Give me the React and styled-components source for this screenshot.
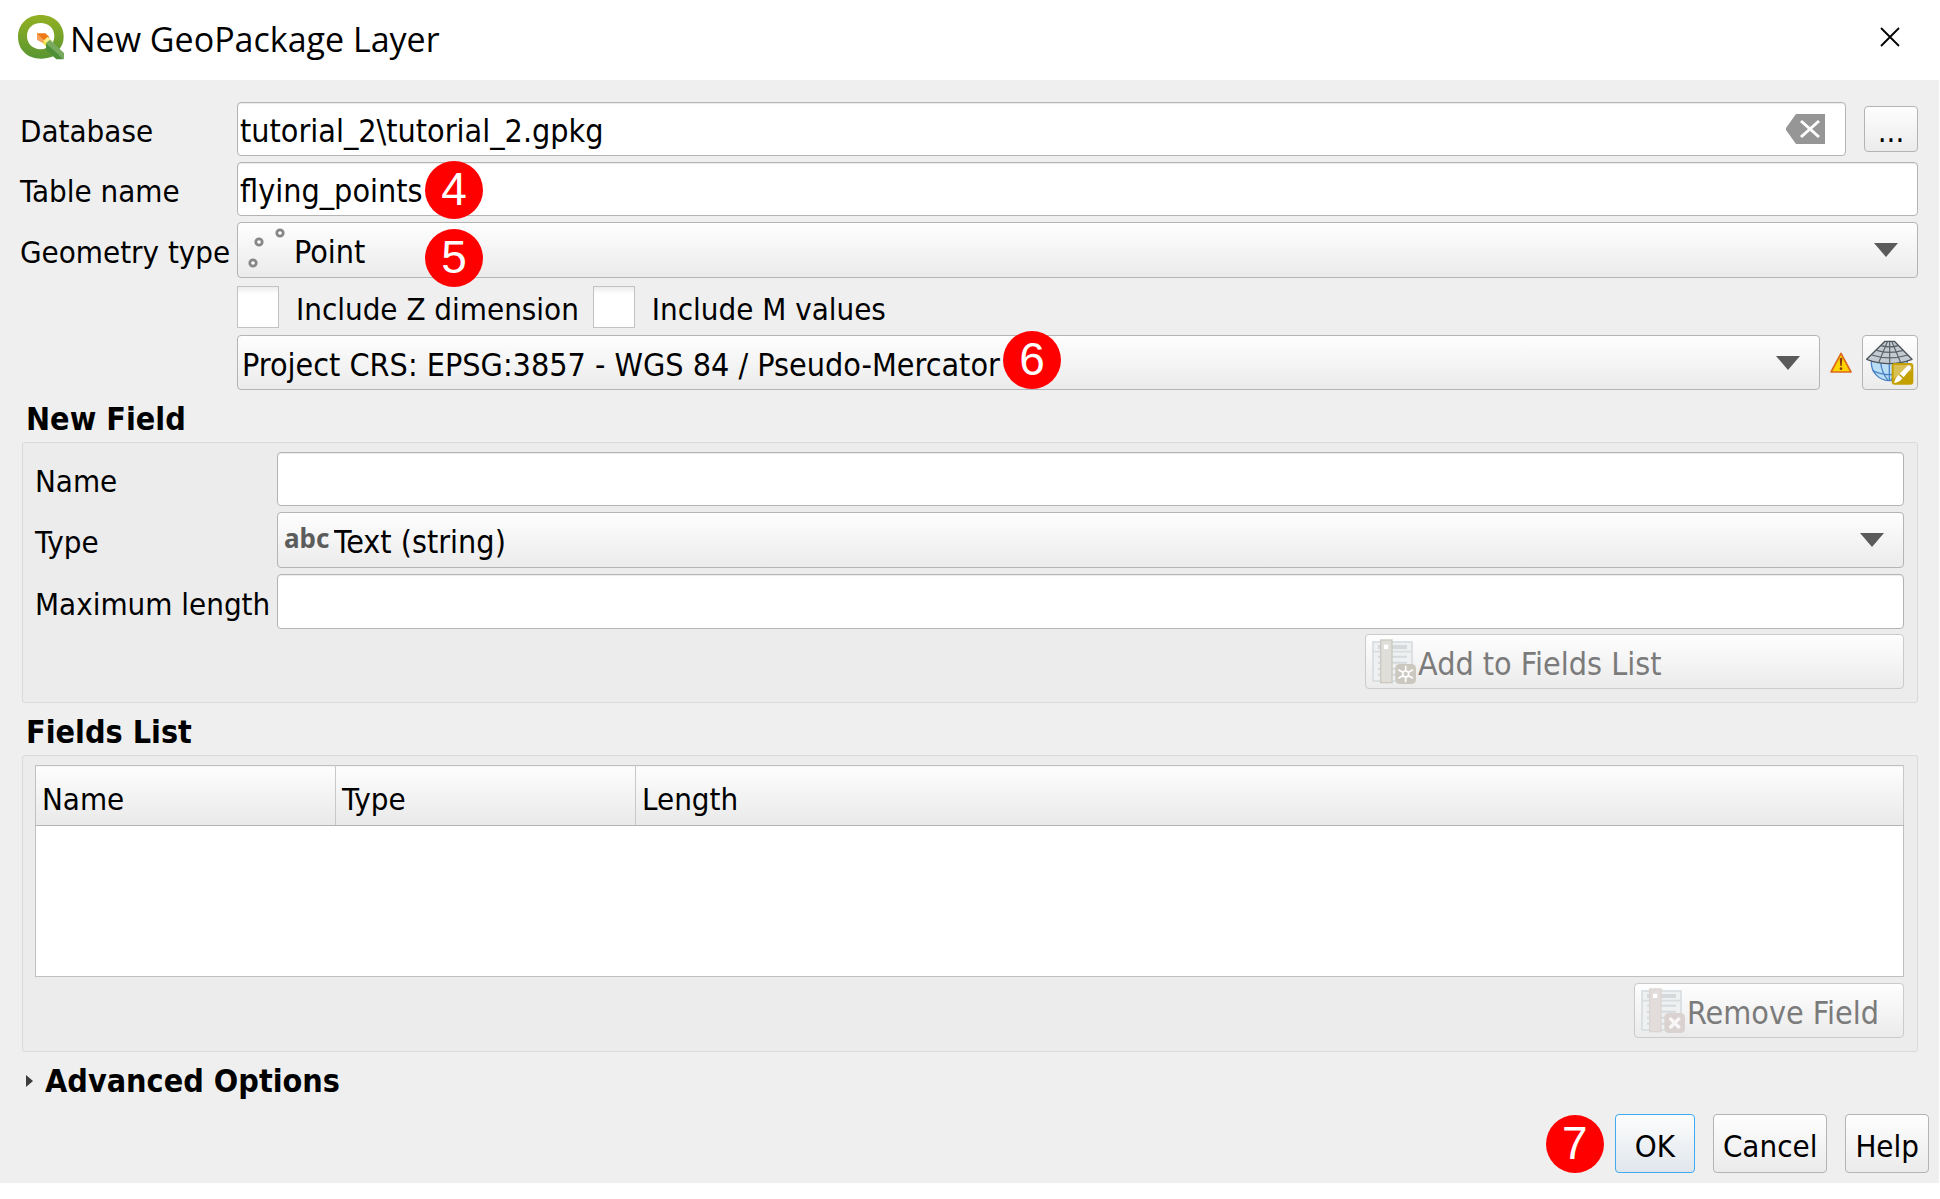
import React from "react";
import styled, { createGlobalStyle, css } from "styled-components";

const uiFont = '"DejaVu Sans Condensed", "Noto Sans", sans-serif';

const GlobalStyle = createGlobalStyle`
  *, *::before, *::after { box-sizing: border-box; }
  body { margin: 0; background: #fff; }
  button, input, select { font: inherit; color: inherit; margin: 0; }
`;

const Dialog = styled.div`
  border-right: 1px solid #fff;
  font-family: ${uiFont};
  font-size: 31px;
  line-height: 36px;
  color: #000;
`;

const TitleBar = styled.header`
  display: flex;
  align-items: center;
  height: 80px;
  padding: 0 39px 6px 18px;
  background: #fff;
`;

const Title = styled.h1`
  flex: 1;
  margin: 0;
  padding: 4px 0 0 5px;
  font-family: "Open Sans", "Noto Sans", sans-serif;
  font-size: 34px;
  line-height: 44px;
  font-weight: 400;
`;

const CloseButton = styled.button`
  display: flex;
  padding: 0;
  border: 0;
  background: none;
`;

const Body = styled.main`
  padding: 22px 21px 0 20px;
  background: #efefef;
`;

const FormGrid = styled.div`
  display: grid;
  grid-template-columns: ${(p) => p.$labelWidth} minmax(0, 1fr);
  row-gap: 6px;
  align-items: center;
`;

const Label = styled.label`
  white-space: nowrap;
  padding-top: 4px;
`;

const FieldRow = styled.div`
  display: flex;
  align-items: center;
  gap: ${(p) => p.$gap || "0"};
  grid-column: 2;
`;

const FieldBox = styled.div`
  position: relative;
  flex: 1;
  min-width: 0;
  height: ${(p) => p.$height || "54px"};
`;

const raised = css`
  border: 1px solid #b4b4b4;
  border-radius: 4px;
  background: linear-gradient(#fefefe, #ebebeb);
`;

const TextInput = styled.input`
  display: block;
  width: 100%;
  height: 100%;
  padding: 4px 2px 0;
  border: 1px solid #b4b4b4;
  border-radius: 4px;
  background: #fff;
  box-shadow: inset 0 1px 1px #ececec;
  font-size: 32px;
  outline: none;
`;

const Select = styled.select`
  ${raised}
  display: block;
  appearance: none;
  width: 100%;
  height: 100%;
  padding: 4px 60px 0 ${(p) => p.$inset || "4px"};
  font-size: 32px;
  outline: none;
`;

const Overlay = styled.span`
  position: absolute;
  display: flex;
  top: 0;
  bottom: ${(p) => p.$lift || "0"};
  align-items: center;
  left: ${(p) => p.$left || "auto"};
  right: ${(p) => p.$right || "auto"};
  pointer-events: none;
`;

const AbcMark = styled(Overlay)`
  color: #5c5c5c;
  font-family: "Noto Sans", sans-serif;
  font-size: 26px;
  font-weight: 700;
`;

const ClearButton = styled.button`
  position: absolute;
  top: 12px;
  right: 21px;
  display: flex;
  padding: 0;
  border: 0;
  background: none;
`;

const Badge = styled.span`
  display: flex;
  align-items: center;
  justify-content: center;
  width: 58px;
  height: 58px;
  padding-bottom: 2px;
  border-radius: 50%;
  background: #f00;
  color: #fff;
  font-family: "Liberation Sans", Arial, sans-serif;
  font-size: 46px;
  line-height: 56px;
`;

const FieldBadge = styled(Badge)`
  position: absolute;
  z-index: 1;
  left: ${(p) => p.$left};
  top: ${(p) => p.$top};
`;

const BrowseButton = styled.button`
  ${raised}
  width: 54px;
  height: 46px;
  padding: 4px 0 0;
`;

const CrsButton = styled.button`
  ${raised}
  display: flex;
  align-items: center;
  justify-content: center;
  width: 56px;
  height: 55px;
  padding: 0;
`;

const WarningSlot = styled.span`
  display: flex;
  justify-content: center;
  width: 42px;
`;

const CheckLabel = styled.label`
  display: flex;
  align-items: center;
  gap: 17px;
  height: 45px;
`;

const CheckText = styled.span`
  padding-top: 4px;
`;

const CheckBox = styled.input`
  appearance: none;
  width: 42px;
  height: 42px;
  border: 1px solid #c2c2c2;
  background: linear-gradient(#ececec, #fff 7px);
`;

const SectionTitle = styled.h2`
  display: flex;
  align-items: center;
  gap: 12px;
  margin: 0;
  padding: 11px 0 5px 6px;
  font-size: 32px;
  line-height: 36px;
  font-weight: 700;
`;

const Group = styled.section`
  margin-left: 2px;
  padding: 9px 13px 13px 12px;
  border: 1px solid #dadada;
  border-radius: 3px;
  background: #ececec;
`;

const ActionButton = styled.button`
  display: flex;
  align-items: center;
  gap: 1px;
  width: ${(p) => p.$width};
  height: 55px;
  margin: ${(p) => p.$gap} 0 0 auto;
  padding: 0 6px;
  border: 1px solid #cbcbcb;
  border-radius: 4px;
  background: linear-gradient(#fefefe, #ebebeb);
  color: #7b7b7b;
  font-size: 32px;
`;

const ActionText = styled.span`
  padding-top: 4px;
`;

const FieldsTable = styled.table`
  width: 100%;
  table-layout: fixed;
  border-collapse: collapse;
  border: 1px solid #c0c0c0;
  background: #fff;
`;

const HeadCell = styled.th`
  width: ${(p) => p.$width || "auto"};
  height: 60px;
  padding: 6px 6px 0;
  border-right: 1px solid #c8c8c8;
  border-bottom: 1px solid #b4b4b4;
  background: linear-gradient(#fdfdfd, #e9e9e9);
  font-weight: 400;
  text-align: left;
`;

const EmptyCell = styled.td`
  height: 151px;
  padding: 0;
`;

const Footer = styled.footer`
  display: flex;
  justify-content: flex-end;
  align-items: center;
  gap: 18px;
  padding: 10px;
  background: #efefef;
`;

const Confirm = styled.div`
  display: flex;
  align-items: center;
  gap: 11px;
`;

const DialogButton = styled.button`
  ${raised}
  min-width: 80px;
  height: 59px;
  padding: 4px 9px 0;
  ${(p) =>
    p.$primary &&
    css`
      border-color: #3daaf2;
      background: linear-gradient(#fdfdfd, #e0e6ec);
    `}
`;

function QgisLogo() {
  return (
    <svg width="47" height="45" viewBox="0 0 141 135" aria-hidden="true">
      <defs>
        <linearGradient id="ring" x1="0" y1="0" x2="0" y2="1">
          <stop offset="0" stopColor="#93b023" />
          <stop offset="1" stopColor="#589632" />
        </linearGradient>
      </defs>
      <path
        fill="url(#ring)"
        fillRule="evenodd"
        d="M68 0C108 0 137 27 137 64C137 82 132 94 122 104L103 86C107 78 109 71 109 63C109 39 91 24 68 24C44 24 27 40 27 64C27 86 44 102 66 103Q78 103 86 98L108 123C94 129 80 131 68 131C29 131 0 104 0 66C0 27 28 0 68 0Z"
      />
      <path fill="#ee7913" d="M57 55H82L94 66L78 82L57 74Z" />
      <path fill="#f5a05a" d="M57 55L78 76V86L57 74Z" />
      <path fill="#f9ee8a" d="M78 76L88 66L102 76L86 92L78 88Z" />
      <path fill="#f0e64a" d="M76 74L86 84V96L76 88Z" />
      <path fill="#78aa5e" d="M84 84L96 74L138 114V133L118 118Z" />
      <path fill="#4f8f38" d="M84 84L137 133H115L84 104Z" />
    </svg>
  );
}

function CloseIcon() {
  return (
    <svg width="20" height="20" viewBox="0 0 20 20" aria-hidden="true">
      <path d="M1 1L19 19M19 1L1 19" stroke="#000" strokeWidth="1.8" fill="none" />
    </svg>
  );
}

function ClearIcon() {
  return (
    <svg width="39" height="30" viewBox="0 0 39 30" aria-hidden="true">
      <path d="M10 0H39V30H10L0 16V14Z" fill="#969696" />
      <path d="M15 7L33 23M33 7L15 23" stroke="#fff" strokeWidth="3" fill="none" />
    </svg>
  );
}

function Arrow() {
  return (
    <svg width="24" height="14" viewBox="0 0 24 14" aria-hidden="true">
      <path d="M0 0H24L12 14Z" fill="#5a5a5a" />
    </svg>
  );
}

function ExpandArrow() {
  return (
    <svg width="7" height="12" viewBox="0 0 7 12" aria-hidden="true">
      <path d="M0 0L7 6L0 12Z" fill="#3c3c3c" />
    </svg>
  );
}

function PointsIcon() {
  return (
    <svg width="38" height="42" viewBox="0 0 38 42" fill="#fff" stroke="#878787" strokeWidth="2.8" aria-hidden="true">
      <circle cx="33" cy="6" r="3.2" />
      <circle cx="12" cy="15" r="3.2" />
      <circle cx="6" cy="36" r="3.2" />
    </svg>
  );
}

function WarningIcon() {
  return (
    <svg width="22" height="21" viewBox="0 0 66 63" role="img" aria-label="Warning">
      <path d="M33 4L63 60H3Z" fill="#fdd400" stroke="#dd6a1c" strokeWidth="5" strokeLinejoin="round" />
      <path d="M29 19Q33 15 37 19L35 42H31Z" fill="#8a3a12" />
      <circle cx="33" cy="50" r="4" fill="#8a3a12" />
    </svg>
  );
}

function GlobeIcon() {
  return (
    <svg width="48" height="45" viewBox="0 0 144 135" aria-hidden="true">
      <g fill="none" stroke="#4a82c4" strokeWidth="4">
        <circle cx="70" cy="68" r="54" fill="#b9def6" />
        <path d="M70 60V122M44 64Q46 98 66 121M96 64Q94 98 74 121M20 92Q70 116 120 92" />
      </g>
      <path d="M57 4H85L138 58Q70 84 2 58Z" fill="#c3cad2" stroke="#4d5358" strokeWidth="4" strokeLinejoin="round" />
      <path
        d="M45 17Q70 24 98 17M32 31Q70 43 112 31M17 45Q70 62 126 45M64 5L38 68M78 5L104 68M71 5V71"
        fill="none"
        stroke="#5b6268"
        strokeWidth="3.5"
      />
      <rect x="77" y="69" width="65" height="65" rx="9" fill="#c4a000" />
      <path d="M83 75H136V93Q100 96 83 118Z" fill="#d9c056" />
      <path d="M132 77L136 83L113 112L101 101L126 76ZM98 104L109 115Q100 128 84 129Q88 112 98 104Z" fill="#fff" />
    </svg>
  );
}

function FieldIcon({ remove }) {
  const bar = remove ? "#e2dcdb" : "#dfded8";
  const barEdge = remove ? "#dcd5d4" : "#cbc9bf";
  return (
    <svg width="45" height="47" viewBox="0 0 135 141" aria-hidden="true">
      <rect x="3" y="12" width="117" height="117" fill="#eef0f1" stroke="#d8dde0" strokeWidth="5" />
      <path d="M3 41H120" stroke="#d8dde0" strokeWidth="5" />
      <path d="M18 27H105" stroke="#d5d9dc" strokeWidth="12" />
      <path d="M18 56H105M18 74H105M18 92H105M18 110H105" stroke="#d5d9dc" strokeWidth="6" />
      <rect x="26" y="6" width="34" height="128" fill={bar} stroke={barEdge} strokeWidth="4" />
      <rect x="36" y="20" width="13" height="13" fill="#fff" />
      <rect x="70" y="78" width="62" height="60" rx="13" fill={remove ? "#d9d2d1" : "#cbc8bf"} />
      {remove ? (
        <path d="M86 93L116 123M116 93L86 123" stroke="#f8f6f6" strokeWidth="10" />
      ) : (
        <g stroke="#fff" strokeWidth="5" fill="none">
          <circle cx="101" cy="108" r="9" />
          <path d="M101 83V99M101 117V133M79 95L93 103M109 113L123 121M123 95L109 103M93 113L79 121" />
        </g>
      )}
    </svg>
  );
}

export default function App() {
  return (
    <>
      <GlobalStyle />
      <Dialog role="dialog" aria-labelledby="dialog-title">
        <TitleBar>
          <QgisLogo />
          <Title id="dialog-title">New GeoPackage Layer</Title>
          <CloseButton type="button" aria-label="Close">
            <CloseIcon />
          </CloseButton>
        </TitleBar>

        <Body>
          <FormGrid $labelWidth="217px">
            <Label htmlFor="database">Database</Label>
            <FieldRow $gap="18px">
              <FieldBox>
                <TextInput id="database" defaultValue={"tutorial_2\\tutorial_2.gpkg"} />
                <ClearButton type="button" aria-label="Clear">
                  <ClearIcon />
                </ClearButton>
              </FieldBox>
              <BrowseButton type="button">...</BrowseButton>
            </FieldRow>

            <Label htmlFor="table-name">Table name</Label>
            <FieldBox>
              <TextInput id="table-name" defaultValue="flying_points" />
              <FieldBadge $left="188px" $top="-1px">4</FieldBadge>
            </FieldBox>

            <Label htmlFor="geometry">Geometry type</Label>
            <FieldBox $height="56px">
              <Select id="geometry" $inset="56px">
                <option>Point</option>
              </Select>
              <Overlay $left="10px" $lift="4px">
                <PointsIcon />
              </Overlay>
              <Overlay $right="20px">
                <Arrow />
              </Overlay>
              <FieldBadge $left="188px" $top="7px">5</FieldBadge>
            </FieldBox>

            <FieldRow $gap="14px">
              <CheckLabel>
                <CheckBox type="checkbox" />
                <CheckText>Include Z dimension</CheckText>
              </CheckLabel>
              <CheckLabel>
                <CheckBox type="checkbox" />
                <CheckText>Include M values</CheckText>
              </CheckLabel>
            </FieldRow>

            <FieldRow>
              <FieldBox $height="55px">
                <Select aria-label="Coordinate reference system">
                  <option>Project CRS: EPSG:3857 - WGS 84 / Pseudo-Mercator</option>
                </Select>
                <Overlay $right="20px">
                  <Arrow />
                </Overlay>
                <FieldBadge $left="766px" $top="-4px">6</FieldBadge>
              </FieldBox>
              <WarningSlot>
                <WarningIcon />
              </WarningSlot>
              <CrsButton type="button" aria-label="Select CRS">
                <GlobeIcon />
              </CrsButton>
            </FieldRow>
          </FormGrid>

          <SectionTitle>New Field</SectionTitle>
          <Group>
            <FormGrid $labelWidth="242px">
              <Label htmlFor="field-name">Name</Label>
              <FieldBox>
                <TextInput id="field-name" />
              </FieldBox>
              <Label htmlFor="field-type">Type</Label>
              <FieldBox $height="56px">
                <Select id="field-type" $inset="56px">
                  <option>Text (string)</option>
                </Select>
                <AbcMark $left="7px" $lift="4px" aria-hidden="true">abc</AbcMark>
                <Overlay $right="20px">
                  <Arrow />
                </Overlay>
              </FieldBox>
              <Label htmlFor="field-length">Maximum length</Label>
              <FieldBox $height="55px">
                <TextInput id="field-length" />
              </FieldBox>
            </FormGrid>
            <ActionButton type="button" disabled $width="539px" $gap="5px">
              <FieldIcon />
              <ActionText>Add to Fields List</ActionText>
            </ActionButton>
          </Group>

          <SectionTitle>Fields List</SectionTitle>
          <Group>
            <FieldsTable>
              <thead>
                <tr>
                  <HeadCell $width="300px">Name</HeadCell>
                  <HeadCell $width="300px">Type</HeadCell>
                  <HeadCell>Length</HeadCell>
                </tr>
              </thead>
              <tbody>
                <tr>
                  <EmptyCell colSpan={3} />
                </tr>
              </tbody>
            </FieldsTable>
            <ActionButton type="button" disabled $width="270px" $gap="6px">
              <FieldIcon remove />
              <ActionText>Remove Field</ActionText>
            </ActionButton>
          </Group>

          <SectionTitle>
            <ExpandArrow />
            Advanced Options
          </SectionTitle>
        </Body>

        <Footer>
          <Confirm>
            <Badge>7</Badge>
            <DialogButton type="button" $primary>OK</DialogButton>
          </Confirm>
          <DialogButton type="button">Cancel</DialogButton>
          <DialogButton type="button">Help</DialogButton>
        </Footer>
      </Dialog>
    </>
  );
}
